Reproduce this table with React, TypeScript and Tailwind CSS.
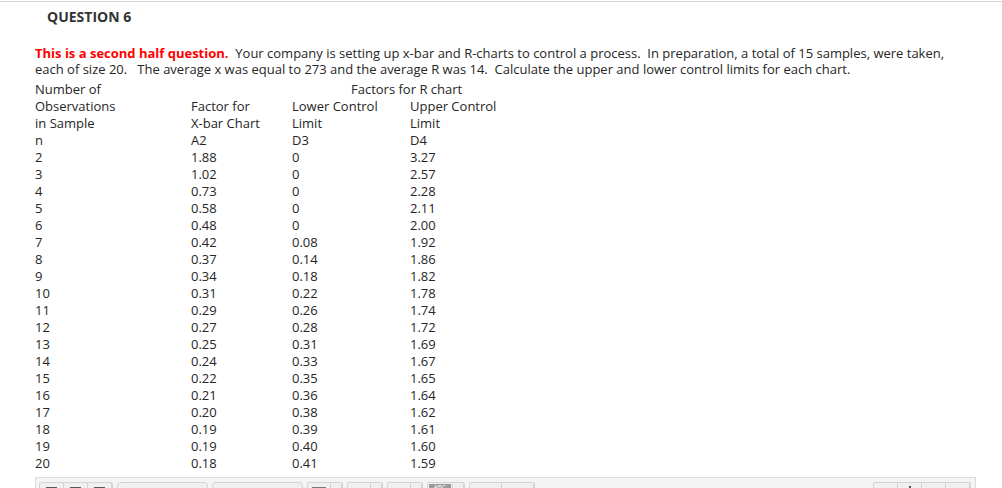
const rows: [string, string, string, string][] = [
  ["2", "1.88", "0", "3.27"],
  ["3", "1.02", "0", "2.57"],
  ["4", "0.73", "0", "2.28"],
  ["5", "0.58", "0", "2.11"],
  ["6", "0.48", "0", "2.00"],
  ["7", "0.42", "0.08", "1.92"],
  ["8", "0.37", "0.14", "1.86"],
  ["9", "0.34", "0.18", "1.82"],
  ["10", "0.31", "0.22", "1.78"],
  ["11", "0.29", "0.26", "1.74"],
  ["12", "0.27", "0.28", "1.72"],
  ["13", "0.25", "0.31", "1.69"],
  ["14", "0.24", "0.33", "1.67"],
  ["15", "0.22", "0.35", "1.65"],
  ["16", "0.21", "0.36", "1.64"],
  ["17", "0.20", "0.38", "1.62"],
  ["18", "0.19", "0.39", "1.61"],
  ["19", "0.19", "0.40", "1.60"],
  ["20", "0.18", "0.41", "1.59"],
];

const grid = "grid grid-cols-[156px_101px_118px_1fr] h-[17px] leading-[17px]";

function Sq() {
  return <div className="w-[11px] h-[3px] mt-[4px] bg-[#555]" />;
}

function Btn({ children, w = 24, split = false }: { children?: React.ReactNode; w?: number; split?: boolean }) {
  return (
    <div className="flex h-full">
      <div className="flex justify-center border-r border-[#d4d4d4]" style={{ width: w }}>
        {children}
      </div>
      {split && <div className="w-[11px] border-r border-[#d4d4d4]" />}
    </div>
  );
}

function Toolbar() {
  return (
    <div className="ml-[35px] mr-[26px] mt-[5px] h-[20px] border border-[#dcdcdc] bg-[#f4f4f4] flex items-start pt-[4px] pl-[3px] gap-[4px] overflow-hidden">
      <div className="flex h-[16px] border border-[#d4d4d4] rounded-[2px] bg-[#f0f0f0]">
        <Btn><Sq /></Btn>
        <Btn><Sq /></Btn>
        <Btn><Sq /></Btn>
      </div>
      <div className="w-[91px] h-[16px] border border-[#d4d4d4] rounded-[4px] bg-[#f0f0f0]" />
      <div className="w-[91px] h-[16px] border border-[#d4d4d4] rounded-[4px] bg-[#f0f0f0]" />
      <div className="flex h-[16px] border border-[#d4d4d4] rounded-[2px] bg-[#f0f0f0]">
        <Btn w={23} split><div className="w-[14px] h-[3px] mt-[4px] bg-[#777]" /></Btn>
      </div>
      <div className="flex h-[16px] border border-[#d4d4d4] rounded-[2px] bg-[#f0f0f0]">
        <Btn w={23} split><div className="w-[12px] h-px mt-[5px] bg-[#666]" /></Btn>
      </div>
      <div className="flex h-[16px] border border-[#d4d4d4] rounded-[2px] bg-[#f0f0f0]">
        <Btn w={23} split><div className="w-[12px] h-px mt-[5px] bg-[#666]" /></Btn>
      </div>
      <div className="flex h-[16px] border border-[#d4d4d4] rounded-[2px] bg-[#f0f0f0]">
        <Btn w={25} split>
          <div className="w-[22px] h-[10px] mt-[1px] bg-[#9a9a9a] text-[6px] leading-[7px] text-white text-center font-['Liberation_Sans',sans-serif]">ABC</div>
        </Btn>
      </div>
      <div className="flex h-[16px] border border-[#d4d4d4] rounded-[2px] bg-[#f0f0f0]">
        <Btn w={32}><div className="w-[6px] h-[6px] mt-[5px] rounded-full border border-[#c8c8c8]" /></Btn>
        <Btn w={32}><div className="w-[7px] h-[5px] mt-[5px] border-l border-r border-[#c8c8c8]" /></Btn>
      </div>
      <div className="flex-1" />
      <div className="flex h-[16px] border border-[#d4d4d4] rounded-[2px] bg-[#f0f0f0] mr-[4px]">
        <Btn><div className="w-[12px] h-[6px] mt-[5px] border border-[#666]" /></Btn>
        <Btn><div className="w-[2px] h-[4px] mt-[3px] bg-[#555]" /></Btn>
        <Btn><div className="w-[10px] h-[6px] mt-[5px] border-l-2 border-r-2 border-t-2 border-[#555]" /></Btn>
        <Btn><div className="w-[8px] h-[5px] mt-[6px] border-l border-r border-[#777]" /></Btn>
      </div>
    </div>
  );
}

export default function App() {
  return (
    <div className="bg-white w-[1002px] h-[488px] overflow-hidden font-['Open_Sans',sans-serif] text-[#262626]">
      <div className="mt-px border-t border-[#d6d6d6]">
        <h2 className="pl-[47px] pt-[5px] text-[14px] leading-[20px] font-bold text-[#333]">QUESTION 6</h2>
        <p className="mt-[18px] pl-[35px] pr-[40px] text-[13px] leading-[16px]">
          <span className="font-bold text-[#ff0000]">This is a second half question.</span>
          {"\u00a0 Your company is setting up x-bar and R-charts to control a process.\u00a0 In preparation, a total of 15 samples, were taken, each of size 20.\u00a0\u00a0 The average x was equal to 273 and the average R was 14.\u00a0 Calculate the upper and lower control limits for each chart."}
        </p>
        <div className="mt-[4px] pl-[35px] text-[13px]">
          <div className={grid}>
            <div>Number of</div>
            <div />
            <div className="col-span-2 pl-[59px]">Factors for R chart</div>
          </div>
          <div className={grid}>
            <div>Observations</div>
            <div>Factor for</div>
            <div>Lower Control</div>
            <div>Upper Control</div>
          </div>
          <div className={grid}>
            <div>in Sample</div>
            <div>X-bar Chart</div>
            <div>Limit</div>
            <div>Limit</div>
          </div>
          <div className={grid}>
            <div>n</div>
            <div>A2</div>
            <div>D3</div>
            <div>D4</div>
          </div>
          {rows.map((r) => (
            <div key={r[0]} className={grid}>
              <div>{r[0]}</div>
              <div>{r[1]}</div>
              <div>{r[2]}</div>
              <div>{r[3]}</div>
            </div>
          ))}
        </div>
        <Toolbar />
      </div>
    </div>
  );
}
